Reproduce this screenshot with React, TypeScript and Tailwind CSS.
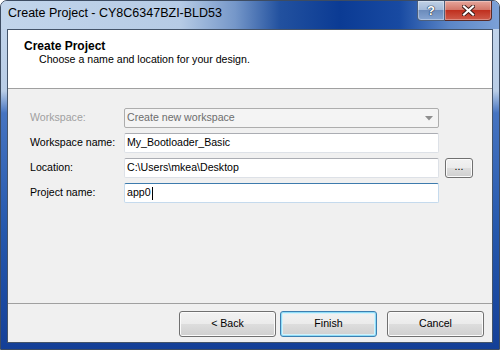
const ui = "font-['Liberation_Sans',Arial,sans-serif]";

function CaptionButtons() {
  return (
    <div className="mr-[7px] flex h-[20px] self-start">
      <div className="flex h-[20px] w-[28px] items-center justify-center rounded-bl-[4px] border border-t-0 border-[#4c5f7c] bg-[linear-gradient(to_bottom,#c0d1e6_0%,#a4bbd9_45%,#6c8cbc_50%,#86a5d2_100%)] shadow-[inset_0_0_0_1px_rgba(255,255,255,0.35)]">
        <span className={`${ui} text-[13px] font-bold leading-none text-white [text-shadow:0_0_1px_#1d2d4a,0_0_1px_#1d2d4a,0_0_1px_#1d2d4a]`}>?</span>
      </div>
      <div className="flex h-[20px] w-[47px] items-center justify-center rounded-br-[4px] border border-l-0 border-t-0 border-[#5a2a26] bg-[linear-gradient(to_bottom,#e6a69c_0%,#d3786a_45%,#c0301f_50%,#cf5c4b_100%)] shadow-[inset_0_0_0_1px_rgba(255,255,255,0.3)]">
        <svg width="13" height="11" viewBox="0 0 13 11">
          <path d="M2 1.5 L11 9.5 M11 1.5 L2 9.5" stroke="#3b1a17" strokeWidth="4" strokeLinecap="square" />
          <path d="M2 1.5 L11 9.5 M11 1.5 L2 9.5" stroke="#ffffff" strokeWidth="2.2" strokeLinecap="square" />
        </svg>
      </div>
    </div>
  );
}

function TextBox({ value, focused, caret }: { value: string; focused?: boolean; caret?: boolean }) {
  return (
    <div
      className={[
        "flex h-[20px] w-[315px] items-center rounded-[2px] border bg-white pl-[2px] text-black",
        focused
          ? "border-[#c5daed] border-t-[#3d7bad]"
          : "border-[#dde1e7] border-t-[#abadb3]",
      ].join(" ")}
    >
      <span>{value}</span>
      {caret ? <span className="ml-[1px] h-[13px] w-[1px] bg-black" /> : null}
    </div>
  );
}

function Button({ label, isDefault, className }: { label: string; isDefault?: boolean; className?: string }) {
  return (
    <div
      className={[
        "flex items-center justify-center rounded-[3px] border text-black",
        "bg-[linear-gradient(to_bottom,#f2f2f2_0%,#ebebeb_50%,#dddddd_51%,#cfcfcf_100%)]",
        isDefault
          ? "border-[#3c7fb1] shadow-[inset_0_0_0_1px_#8fdcf7,inset_0_0_0_2px_#d4f1fb]"
          : "border-[#707070] shadow-[inset_0_0_0_1px_#fbfbfb]",
        className ?? "",
      ].join(" ")}
    >
      {label}
    </div>
  );
}

export default function App() {
  return (
    <div className={`${ui} h-[350px] w-[500px] bg-white text-[10.6px]`}>
      <div className="flex h-[350px] w-[500px] flex-col rounded-t-[7px] border border-[#3d4c62] bg-[linear-gradient(to_bottom,#c4d6ec_0px,#b9cde6_90px,#4674c1_112px,#2558ad_230px,#143f97_350px)]">
        {/* title bar */}
        <div className="flex h-[28px] shrink-0 justify-between rounded-t-[6px] bg-[linear-gradient(to_right,#c2d5eb_0%,#b6cbe5_36%,#7597c9_47%,#22519f_56%,#0b3b94_68%,#184aa2_80%,#5b86c7_90%,#7ca1d7_100%)]">
          <div className="pl-[7px] pt-[5px] text-[12.5px] leading-[15px] text-black">
            Create Project - CY8C6347BZI-BLD53
          </div>
          <CaptionButtons />
        </div>

        {/* client */}
        <div className="mx-[6px] mb-[6px] flex flex-1 flex-col border border-[#44546a] bg-[#f0f0f0]">
          <div className="h-[59px] shrink-0 border-b border-[#a0a0a0] bg-white pl-[16px] pt-[9px]">
            <div className="text-[12px] font-bold leading-[14px] text-black">Create Project</div>
            <div className="ml-[15px] text-[10.6px] leading-[13px] text-black">
              Choose a name and location for your design.
            </div>
          </div>

          <div className="flex flex-1 flex-col gap-[5px] pl-[22px] pt-[19px]">
            <div className="flex h-[20px] items-center">
              <div className="w-[94px] text-[#a0a0a0]">Workspace:</div>
              <div className="flex h-[20px] w-[315px] items-center justify-between rounded-[2px] border border-[#adadad] bg-[#f4f4f4] pl-[2px] pr-[5px] text-[#6d6d6d]">
                <span>Create new workspace</span>
                <svg width="8" height="5" viewBox="0 0 8 5">
                  <path d="M0 0 L8 0 L4 4.5 Z" fill="#8e8e8e" />
                </svg>
              </div>
            </div>
            <div className="flex h-[20px] items-center">
              <div className="w-[94px] text-black">Workspace name:</div>
              <TextBox value="My_Bootloader_Basic" />
            </div>
            <div className="flex h-[20px] items-center">
              <div className="w-[94px] text-black">Location:</div>
              <TextBox value="C:\Users\mkea\Desktop" />
              <Button label="..." className="ml-[6px] h-[20px] w-[28px] pb-[3px]" />
            </div>
            <div className="flex h-[20px] items-center">
              <div className="w-[94px] text-black">Project name:</div>
              <TextBox value="app0" focused caret />
            </div>
          </div>

          <div className="flex h-[39px] shrink-0 justify-end border-t border-[#a0a0a0] pr-[8px] pt-[7px]">
            <Button label="< Back" className="h-[26px] w-[97px]" />
            <Button label="Finish" isDefault className="ml-[4px] h-[26px] w-[97px]" />
            <Button label="Cancel" className="ml-[10px] h-[26px] w-[97px]" />
          </div>
        </div>
      </div>
    </div>
  );
}
